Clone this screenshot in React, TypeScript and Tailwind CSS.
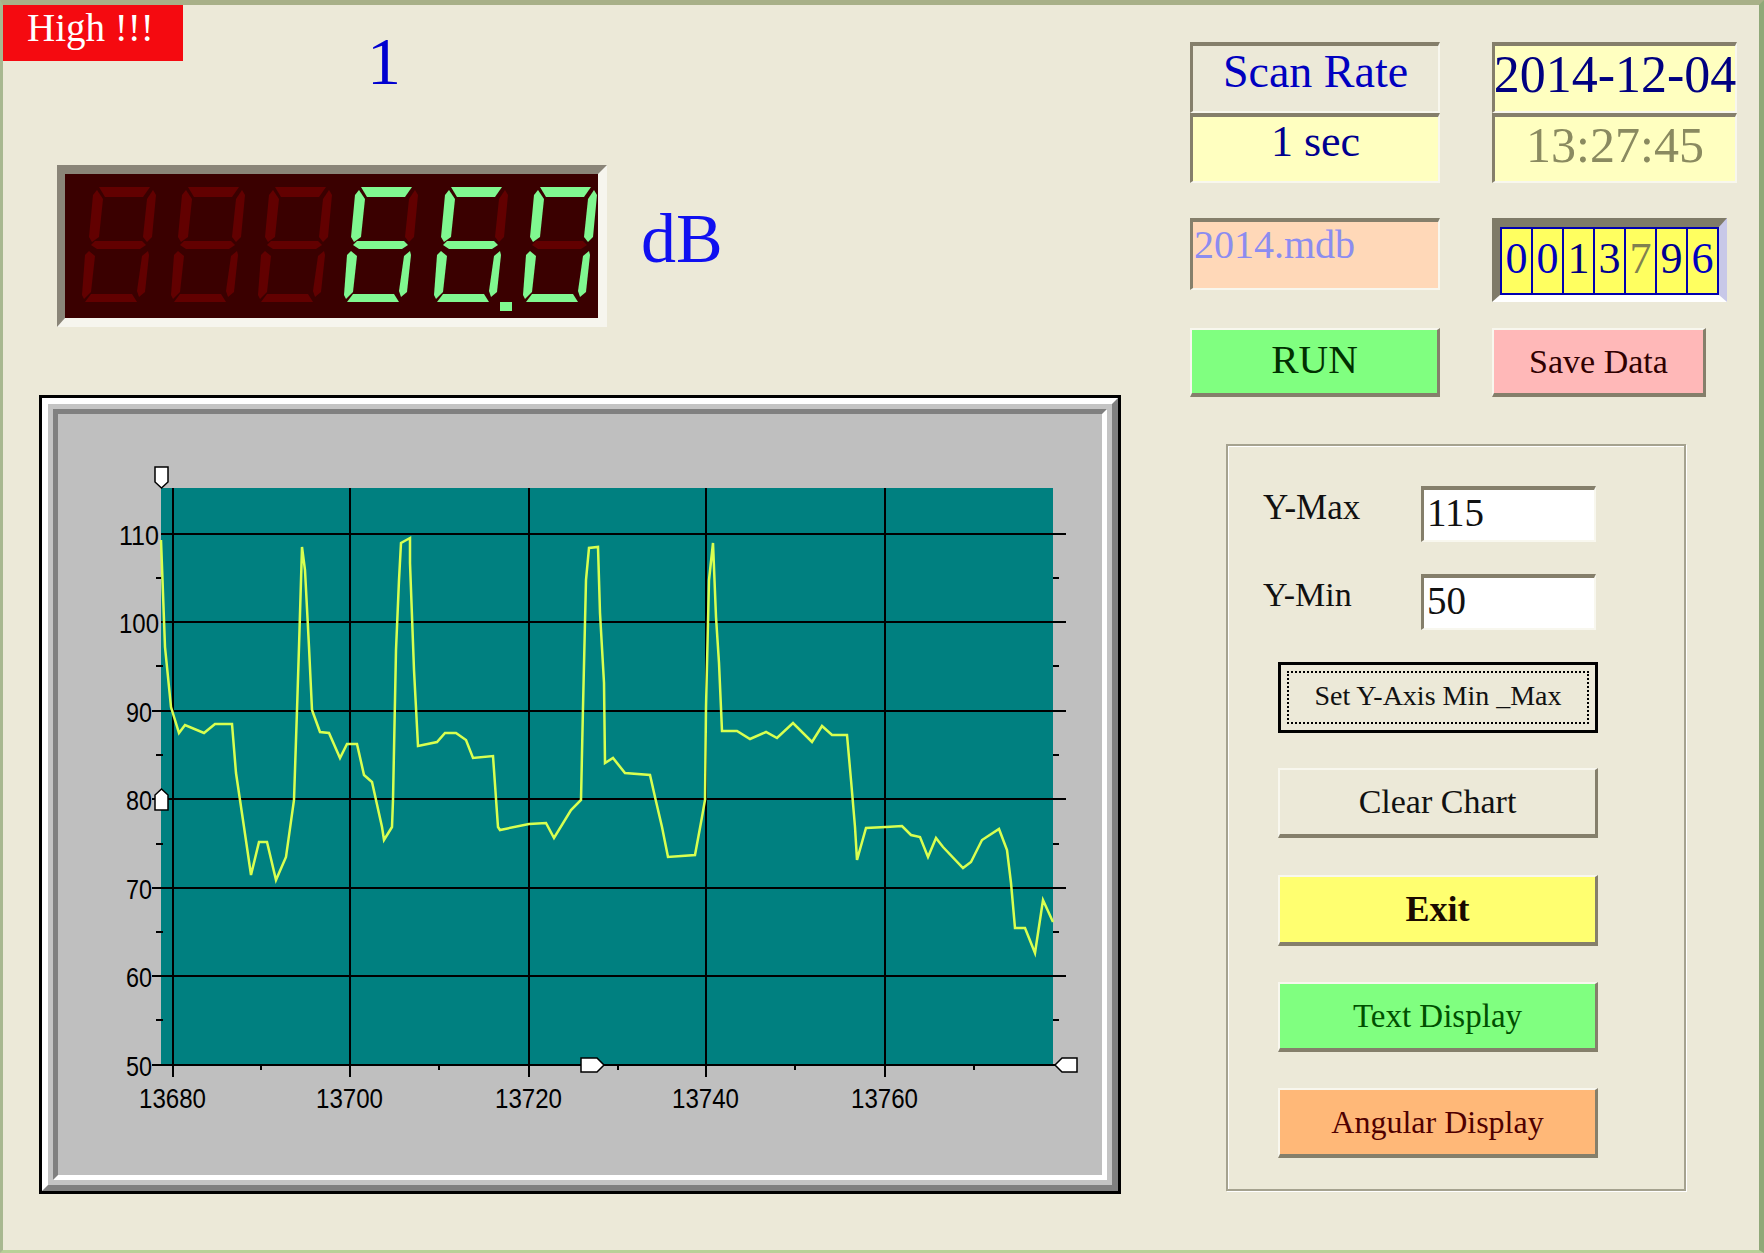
import React from "react";

const SEGMENTS: Record<string, string> = {
  a: "17,0 68,0 61,10 23,10",
  b: "71,3 74,8 70,50 65,55 61,50 65,12",
  c: "66,64 67,68 63,105 57,110 55,104 60,69",
  d: "9,107 50,107 55,115 3,115",
  e: "7,64 13,69 9,105 2,112 0,108 3,68",
  f: "15,3 21,12 17,50 10,55 7,50 11,8",
  g: "13,54 60,54 64,58 58,62 15,62 9,58",
};

const LED_OFF = "#620000";
const LED_ON = "#80f890";

const DIGITS = [
  { x: 17, lit: "" },
  { x: 106, lit: "" },
  { x: 193, lit: "" },
  { x: 279, lit: "afgedc" },
  { x: 369, lit: "afgedc" },
  { x: 458, lit: "abcdef" },
];

function SevenSegment({ x, lit }: { x: number; lit: string }) {
  return (
    <g transform={`translate(${x} 13)`}>
      {Object.entries(SEGMENTS).map(([name, points]) => (
        <polygon key={name} points={points} fill={lit.includes(name) ? LED_ON : LED_OFF} />
      ))}
    </g>
  );
}

function LedDisplay() {
  return (
    <div className="w-[550px] h-[162px] box-border border-t-[9px] border-l-[8px] border-r-[9px] border-b-[9px] border-t-[#8a8578] border-l-[#8a8578] border-r-[#f6f5ee] border-b-[#f6f5ee] bg-[#3a0000]">
      <svg width="533" height="144" viewBox="0 0 533 144">
        {DIGITS.map((d) => (
          <SevenSegment key={d.x} x={d.x} lit={d.lit} />
        ))}
        <rect x="435" y="128" width="12" height="9" fill={LED_ON} />
      </svg>
    </div>
  );
}

// plotted trace, in page pixels
const TRACE = [
  [161, 540], [165, 647], [171, 707], [179, 733], [185, 725], [204, 733], [215, 724], [232, 724],
  [236, 773], [240, 800], [244, 827], [251, 875], [259, 842], [267, 842], [276, 880], [286, 857],
  [294, 800], [297, 710], [299, 647], [302, 547], [305, 570], [309, 647], [312, 710], [320, 732],
  [329, 733], [340, 758], [347, 744], [357, 744], [364, 775], [372, 782], [382, 827], [384, 840],
  [392, 827], [393, 800], [396, 650], [399, 580], [401, 543], [410, 538], [410, 563], [414, 670],
  [418, 746], [437, 742], [445, 733], [456, 733], [466, 740], [473, 758], [493, 756], [498, 827],
  [500, 830], [529, 824], [546, 823], [554, 838], [571, 810], [581, 800], [583, 707], [586, 580],
  [589, 548], [598, 547], [600, 613], [604, 683], [605, 763], [613, 758], [625, 773], [650, 775],
  [655, 797], [662, 827], [668, 857], [695, 855], [702, 817], [705, 800], [706, 707], [709, 580],
  [713, 543], [716, 617], [719, 663], [722, 731], [737, 731], [750, 739], [766, 732], [777, 738],
  [793, 723], [812, 742], [822, 726], [832, 735], [847, 735], [851, 780], [855, 827], [857, 860],
  [866, 828], [886, 827], [902, 826], [911, 835], [920, 837], [928, 857], [936, 838], [943, 847],
  [963, 868], [971, 862], [982, 840], [999, 829], [1007, 850], [1011, 883], [1015, 928], [1025, 928],
  [1035, 953], [1043, 900], [1053, 922],
];

const Y_GRID = [
  { y: 534, label: "110" },
  { y: 622, label: "100" },
  { y: 711, label: "90" },
  { y: 799, label: "80" },
  { y: 888, label: "70" },
  { y: 976, label: "60" },
  { y: 1065, label: "50" },
];
const Y_MINOR = [578, 666, 755, 844, 932, 1020];
const X_GRID = [
  { x: 173, label: "13680" },
  { x: 350, label: "13700" },
  { x: 529, label: "13720" },
  { x: 706, label: "13740" },
  { x: 885, label: "13760" },
];
const X_MINOR = [261, 439, 618, 795, 974];

function Chart() {
  return (
    <svg width="1044" height="761" viewBox="58 414 1044 761" className="block font-['Liberation_Sans',sans-serif]">
      <rect x="161" y="488" width="892" height="577" fill="#008080" />
      {Y_GRID.map((g) => (
        <line key={g.y} x1={g.label === "110" || g.label === "100" ? 161 : 152} x2="1066" y1={g.y} y2={g.y} stroke="#000" strokeWidth="2" />
      ))}
      {Y_MINOR.map((y) => (
        <g key={y}>
          <line x1="156" x2="163" y1={y} y2={y} stroke="#000" strokeWidth="2" />
          <line x1="1053" x2="1059" y1={y} y2={y} stroke="#000" strokeWidth="2" />
        </g>
      ))}
      {X_GRID.map((g) => (
        <line key={g.x} x1={g.x} x2={g.x} y1="488" y2="1077" stroke="#000" strokeWidth="2" />
      ))}
      {X_MINOR.map((x) => (
        <line key={x} x1={x} x2={x} y1="1065" y2="1070" stroke="#000" strokeWidth="2" />
      ))}
      <polyline points={TRACE.map((p) => p.join(",")).join(" ")} fill="none" stroke="#d8ff50" strokeWidth="2.5" />
      {Y_GRID.map((g) => (
        <text
          key={g.label}
          x={g.label.length === 3 ? 119 : 126}
          y={g.y + 11}
          fontSize="28"
          textLength={g.label.length === 3 ? 40 : 26}
          lengthAdjust="spacingAndGlyphs"
          fill="#000"
        >
          {g.label}
        </text>
      ))}
      {X_GRID.map((g) => (
        <text key={g.x} x={g.x - 34} y="1108" fontSize="28" textLength="67" lengthAdjust="spacingAndGlyphs" fill="#000">
          {g.label}
        </text>
      ))}
      {/* cursors */}
      <polygon points="155,467 168,467 168,482 161.5,488 155,482" fill="#fff" stroke="#000" strokeWidth="1.5" />
      <polygon points="161.5,789 168,795 168,810 155,810 155,795" fill="#fff" stroke="#000" strokeWidth="1.5" />
      <polygon points="581,1058 597,1058 604,1065 597,1072 581,1072" fill="#fff" stroke="#000" strokeWidth="1.5" />
      <polygon points="1055,1065 1062,1058 1077,1058 1077,1072 1062,1072" fill="#fff" stroke="#000" strokeWidth="1.5" />
    </svg>
  );
}

const sunken =
  "box-border border-t-4 border-l-[3px] border-r-2 border-b-2 border-t-[#857f6b] border-l-[#857f6b] border-r-[#f8f7ee] border-b-[#f8f7ee]";
const raised =
  "box-border border-t-2 border-l-2 border-r-[3px] border-b-4 border-t-[#f8f7ee] border-l-[#f8f7ee] border-r-[#857f6b] border-b-[#857f6b] flex items-center justify-center";

function Counter() {
  const digits = [
    { ch: "0", color: "text-[#0000c0]" },
    { ch: "0", color: "text-[#0000c0]" },
    { ch: "1", color: "text-[#000080]" },
    { ch: "3", color: "text-[#000090]" },
    { ch: "7", color: "text-[#808050]" },
    { ch: "9", color: "text-[#000090]" },
    { ch: "6", color: "text-[#0000c0]" },
  ];
  return (
    <div className="w-[235px] h-[84px] box-border border-t-[9px] border-l-[8px] border-r-[8px] border-b-[7px] border-t-[#7f7b68] border-l-[#7f7b68] border-r-[#c8c8e8] border-b-white bg-[#b8b8e0]">
      <div className="flex w-[219px] h-[68px] box-border border-2 border-[#0000b0] bg-[#ffff60]">
        {digits.map((d, i) => (
          <div
            key={i}
            className={`flex-1 flex items-center justify-center pb-[4px] text-[44px] leading-none ${i > 0 ? "border-l-2 border-[#0000b0]" : ""} ${d.color}`}
          >
            {d.ch}
          </div>
        ))}
      </div>
    </div>
  );
}

export default function App() {
  return (
    <div className="w-[1764px] h-[1253px] box-border flex overflow-hidden bg-[#ece9d8] border-t-[5px] border-l-[3px] border-r-[5px] border-b-[3px] border-t-[#a8b088] border-l-[#a8b890] border-r-[#8fa878] border-b-[#b8d098] font-['Liberation_Serif',serif]">
      {/* left column */}
      <div className="w-[1187px] shrink-0">
        <div className="flex h-[56px]">
          <div className="w-[180px] h-[56px] bg-[#f50a10] text-white text-[39px] leading-[46px] pl-[24px]">High !!!</div>
          <div className="ml-[184px] mt-[22px] text-[68px] leading-none text-[#0000d0]">1</div>
        </div>
        <div className="flex items-center mt-[104px] ml-[54px]">
          <LedDisplay />
          <div className="ml-[34px] mb-[14px] text-[70px] leading-none text-[#1010f0]">dB</div>
        </div>
        <div className="mt-[68px] ml-[36px] w-[1082px] h-[799px] box-border border-[3px] border-black">
          <div className="w-full h-full box-border border-[6px] border-t-white border-l-white border-r-[#808080] border-b-[#808080] bg-[#c4c4c4] p-[5px]">
            <div className="w-full h-full box-border border-[5px] border-t-[#808080] border-l-[#808080] border-r-white border-b-white bg-[#bfbfbf]">
              <Chart />
            </div>
          </div>
        </div>
      </div>

      {/* right column */}
      <div className="pt-[37px]">
        <div className="flex gap-[52px]">
          <div className="w-[250px]">
            <div className={`h-[71px] pb-[14px] flex items-center justify-center text-[46px] leading-none text-[#0000c0] bg-[#ece9d8] ${sunken}`}>Scan Rate</div>
            <div className={`h-[70px] pb-[14px] flex items-center justify-center text-[44px] leading-none font-medium text-[#000090] bg-[#ffffc0] ${sunken}`}>1 sec</div>
          </div>
          <div className="w-[245px]">
            <div className={`h-[71px] pb-[8px] flex items-center justify-center whitespace-nowrap text-[52px] leading-none text-[#000080] bg-[#ffffc0] ${sunken}`}>2014-12-04</div>
            <div className={`h-[70px] pb-[8px] flex items-center justify-center text-[50px] leading-none text-[#8a8a60] bg-[#ffffc0] ${sunken}`}>13:27:45</div>
          </div>
        </div>

        <div className="flex gap-[52px] mt-[35px] h-[84px]">
          <div className={`w-[250px] h-[72px] pl-[1px] pt-[3px] text-[40px] leading-none font-medium text-[#8c8cf0] bg-[#ffd8b8] ${sunken}`}>2014.mdb</div>
          <Counter />
        </div>

        <div className="flex gap-[52px] mt-[26px]">
          <div className={`w-[250px] h-[69px] pb-[4px] text-[41px] leading-none font-medium text-[#003000] bg-[#80ff80] ${raised}`}>RUN</div>
          <div className={`w-[214px] h-[69px] text-[34px] leading-none text-[#300000] bg-[#ffb8b8] ${raised}`}>Save Data</div>
        </div>

        {/* y axis and chart controls */}
        <div className="mt-[47px] ml-[36px] w-[460px] h-[747px] box-border border-2 border-[#a5a28f] shadow-[inset_1px_1px_0_#fff,1px_1px_0_#fff] pt-[40px]">
          <div className="flex pl-[35px]">
            <div className="w-[158px] mt-[4px] text-[35px] leading-none text-[#111]">Y-Max</div>
            <div className={`w-[175px] h-[56px] pl-[3px] text-[39px] leading-[46px] text-[#111] bg-white ${sunken}`}>115</div>
          </div>
          <div className="flex pl-[35px] mt-[32px]">
            <div className="w-[158px] mt-[4px] text-[34px] leading-none text-[#111]">Y-Min</div>
            <div className={`w-[175px] h-[56px] pl-[3px] text-[39px] leading-[46px] text-[#111] bg-white ${sunken}`}>50</div>
          </div>

          <div className="ml-[50px] mt-[32px] w-[320px] flex flex-col">
            <div className="h-[71px] box-border border-[3px] border-black p-[6px] bg-[#ece9d8]">
              <div className="h-full box-border border-2 border-dotted border-black pb-[4px] flex items-center justify-center text-[28px] leading-none text-[#111]">
                Set Y-Axis Min _Max
              </div>
            </div>
            <div className={`mt-[35px] h-[70px] text-[34px] leading-none text-[#111] bg-[#ece9d8] ${raised}`}>Clear Chart</div>
            <div className={`mt-[37px] h-[71px] pb-[2px] text-[36px] leading-none font-bold text-[#1a0a00] bg-[#ffff70] ${raised}`}>Exit</div>
            <div className={`mt-[36px] h-[70px] text-[33px] leading-none text-[#005000] bg-[#80ff80] ${raised}`}>Text Display</div>
            <div className={`mt-[36px] h-[70px] text-[32px] leading-none text-[#500000] bg-[#ffb878] ${raised}`}>Angular Display</div>
          </div>
        </div>
      </div>
    </div>
  );
}
